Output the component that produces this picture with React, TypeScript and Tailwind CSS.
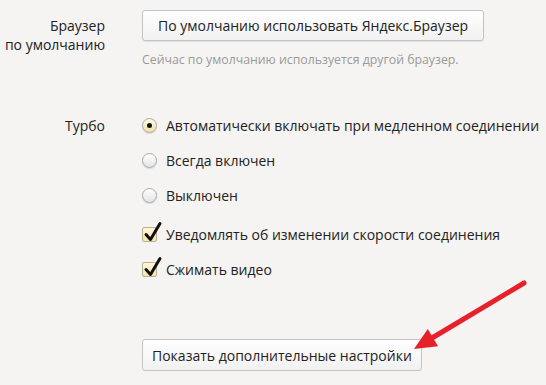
import React from "react";

function Radio({ checked }: { checked?: boolean }) {
  return (
    <span
      className={
        "w-[15px] h-[15px] rounded-full border border-[#a9a9a9] grid place-items-center shrink-0 shadow-[0_1px_1px_rgba(0,0,0,0.12)] " +
        (checked
          ? "bg-[linear-gradient(#fffbe6,#efe0a6)]"
          : "bg-[linear-gradient(#ffffff,#e4e4e4)]")
      }
    >
      {checked && <span className="w-[5px] h-[5px] rounded-full bg-[#111]" />}
    </span>
  );
}

function Check() {
  return (
    <span className="relative w-[15px] h-[15px] shrink-0 rounded-[2px] border border-[#b9b08e] bg-[linear-gradient(#fff6d6,#f4e6b0)]">
      <svg className="absolute -top-[7px] left-0" width="20" height="22" viewBox="0 0 20 22">
        <path d="M3 13.5 L7.5 18.5 L17 2.5" fill="none" stroke="#111" strokeWidth="3" strokeLinecap="round" strokeLinejoin="round" />
      </svg>
    </span>
  );
}

export default function App() {
  const radios = [
    { label: "Автоматически включать при медленном соединении", checked: true },
    { label: "Всегда включен" },
    { label: "Выключен" },
  ];
  const checks = ["Уведомлять об изменении скорости соединения", "Сжимать видео"];

  return (
    <div className="relative w-[546px] h-[385px] overflow-hidden bg-[#f5f4f2] text-[#222] text-[14px] font-['Open_Sans','Noto_Sans',sans-serif] pt-[10px]">
      <div className="grid grid-cols-[105px_1fr] gap-x-[37px]">
        <div className="text-right leading-[19px] pt-[6px]">
          <div>Браузер</div>
          <div>по умолчанию</div>
        </div>
        <div>
          <button className="h-[31px] px-[15px] rounded-[3px] border border-[#c4c4c4] bg-[linear-gradient(#ffffff,#f1f1f1)] shadow-[0_1px_1px_rgba(0,0,0,0.08)] text-[#222]">
            По умолчанию использовать Яндекс.Браузер
          </button>
          <div className="mt-[11px] text-[12.3px] leading-[16px] text-[#9a9a9a]">
            Сейчас по умолчанию используется другой браузер.
          </div>
        </div>

        <div className="text-right mt-[40px] h-[35px] leading-[35px]">Турбо</div>
        <div className="mt-[40px]">
          {radios.map((r) => (
            <div key={r.label} className="flex items-center gap-[9px] h-[35px]">
              <Radio checked={r.checked} />
              <span>{r.label}</span>
            </div>
          ))}
          <div className="mt-[4px]">
            {checks.map((c) => (
              <div key={c} className="flex items-center gap-[9px] h-[35px]">
                <Check />
                <span>{c}</span>
              </div>
            ))}
          </div>
          <button className="mt-[52px] h-[32px] px-[9px] rounded-[3px] border border-[#c4c4c4] bg-[linear-gradient(#ffffff,#f1f1f1)] text-[#222]">
            Показать дополнительные настройки
          </button>
        </div>
      </div>

      <svg className="absolute left-0 top-0" width="546" height="385" viewBox="0 0 546 385">
        <line x1="524" y1="283" x2="432" y2="338" stroke="#e8202a" strokeWidth="5" strokeLinecap="round" />
        <polygon points="414,349 427.8,329.1 438,346.3" fill="#e8202a" />
      </svg>
    </div>
  );
}
